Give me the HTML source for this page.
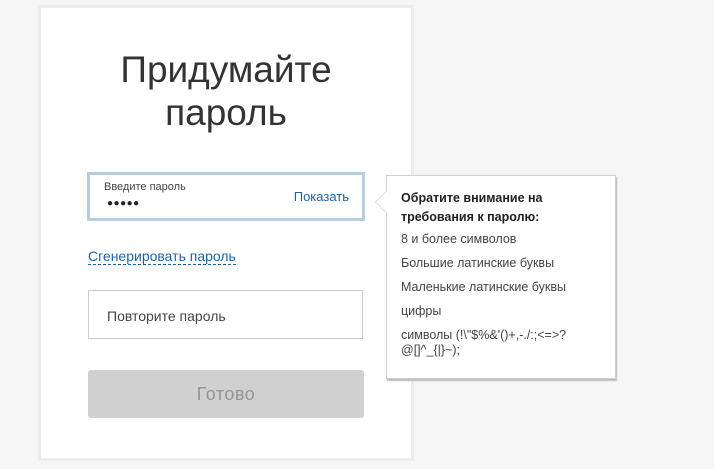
<!DOCTYPE html>
<html><head><meta charset="utf-8"><style>
*{margin:0;padding:0;box-sizing:border-box}
body{width:714px;height:469px;background:#f5f6f5;font-family:"Liberation Sans","DejaVu Sans",sans-serif;position:relative;overflow:hidden}
.card{position:absolute;left:38px;top:5px;width:376px;height:456px;border:3px solid #ececec;background:#fff}
.title{position:absolute;left:38px;width:376px;top:48px;text-align:center;font-size:37px;line-height:43px;color:#333}
.in1{position:absolute;left:87px;top:172px;width:278px;height:49px;border:3px solid #b3cfe0;background:#fff}
.in1 .lbl{position:absolute;left:14px;top:6px;font-size:11px;color:#444}
.in1 .dots{position:absolute;left:17px;top:23px;font-size:10px;color:#222;letter-spacing:0.5px}
.in1 .show{position:absolute;right:13px;top:14px;font-size:13px;color:#1a64a8}
.gen{position:absolute;left:88px;top:248px;font-size:14px;color:#1a64a8;border-bottom:1px dashed #1a64a8;line-height:16px}
.in2{position:absolute;left:88px;top:290px;width:275px;height:49px;border:1px solid #ccc;font-size:14px;color:#444;padding:17px 0 0 18px}
.btn{position:absolute;left:88px;top:370px;width:276px;height:48px;background:#d0d0d0;border-radius:3px;text-align:center;line-height:48px;font-size:18px;color:#949494;letter-spacing:.5px}
.tip{position:absolute;left:386px;top:175px;width:230px;height:204px;background:#fff;border:1px solid #d0d0d0;box-shadow:1px 2px 1px #bbb;padding:13px 0 0 14px;font-size:12.5px;color:#444}
.tip b{display:block;color:#222;line-height:19px;margin-bottom:0}
.tip p{line-height:24px}
.arr{position:absolute;left:-12px;top:14px;width:0;height:0;border-top:12px solid transparent;border-bottom:12px solid transparent;border-right:12px solid #d0d0d0}
.arr:after{content:"";position:absolute;left:1px;top:-11px;border-top:11px solid transparent;border-bottom:11px solid transparent;border-right:11px solid #fff}
</style></head><body>
<div class="card"></div>
<div class="title">Придумайте<br>пароль</div>
<div class="in1"><div class="lbl">Введите пароль</div><div class="dots">●●●●●</div><div class="show">Показать</div></div>
<div class="gen">Сгенерировать пароль</div>
<div class="in2">Повторите пароль</div>
<div class="btn">Готово</div>
<div class="tip"><div class="arr"></div>
<b>Обратите внимание на<br>требования к паролю:</b>
<p>8 и более символов</p>
<p>Большие латинские буквы</p>
<p>Маленькие латинские буквы</p>
<p>цифры</p>
<p style="line-height:15px;margin-top:5px">символы (!\"$%&amp;'()+,-./:;&lt;=&gt;?<br>@[]^_{|}~);</p>
</div>
</body></html>
